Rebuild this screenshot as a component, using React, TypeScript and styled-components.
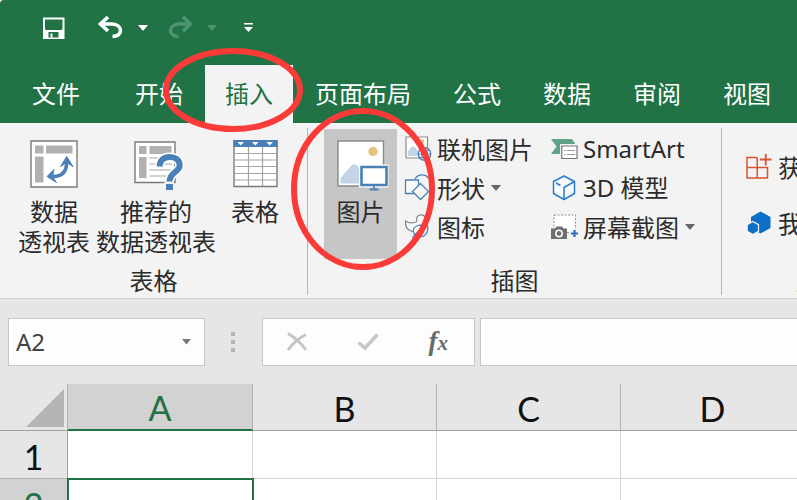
import React from 'react';
import styled, { createGlobalStyle } from 'styled-components';

const GREEN = '#217346';
const BLUE = '#4a80b8';
const UI_FONT = "'Noto Sans', 'Noto Sans CJK SC', sans-serif";
const CJK_FONT = "'Noto Sans CJK SC', 'Noto Sans', sans-serif";

const GlobalStyle = createGlobalStyle`
  * { box-sizing: border-box; }
  body { margin: 0; background: #fff; }
  button, input { font: inherit; color: inherit; }
  button { border: 0; padding: 0; background: none; cursor: pointer; }
  svg { display: block; flex: none; overflow: visible; }
`;

const Window = styled.div`
  height: 100vh;
  overflow: hidden;
  display: flex;
  flex-direction: column;
  border-top-left-radius: 4px;
  background: #e6e6e6;
  font-family: ${UI_FONT};
  font-size: 24px;
  line-height: 30px;
  color: #2b2b2b;
`;

const TitleBar = styled.header`
  flex: none;
  background: ${GREEN};
  color: #fff;
`;

const QuickAccess = styled.div`
  display: flex;
  align-items: center;
  height: 65px;
  padding: 0 42px 9px;
`;

const QuickButton = styled.button<{ $space: number; $dim?: boolean }>`
  display: flex;
  margin-right: ${(p) => p.$space}px;
  color: ${(p) => (p.$dim ? '#4f9470' : '#fff')};
`;

const TabList = styled.nav`
  display: flex;
  gap: 2px;
  padding-left: 12px;
  font-family: ${CJK_FONT};
`;

const Tab = styled.button<{ $active?: boolean; $file?: boolean }>`
  position: relative;
  flex: none;
  height: 58px;
  padding: 0 20px 3px;
  margin-right: ${(p) => (p.$file ? 13 : 0)}px;
  white-space: nowrap;
  background: ${(p) => (p.$active ? '#f3f3f3' : 'transparent')};
  color: ${(p) => (p.$active ? GREEN : '#fff')};
`;

const Ring = styled.svg<{ $left: number; $top: number }>`
  position: absolute;
  left: ${(p) => p.$left}px;
  top: ${(p) => p.$top}px;
  z-index: 2;
  pointer-events: none;
  fill: none;
  stroke: #fa3b38;
  stroke-width: 6;
`;

const Ribbon = styled.section`
  flex: none;
  display: flex;
  background: #f3f3f3;
  border-bottom: 1px solid #cfcfcf;
  padding: 5px 0 3px;
`;

const Group = styled.div`
  flex: none;
  display: flex;
  flex-direction: column;
  border-right: 1px solid #b5b5b5;
  font-family: ${CJK_FONT};
`;

const GroupBody = styled.div<{ $gap: number; $pad: string }>`
  display: flex;
  gap: ${(p) => p.$gap}px;
  height: 131px;
  padding: ${(p) => p.$pad};
`;

const GroupLabel = styled.div`
  margin-top: 6px;
  text-align: center;
`;

const LargeButton = styled.button<{ $width?: number; $pressed?: boolean }>`
  position: relative;
  display: flex;
  flex-direction: column;
  align-items: center;
  gap: 6px;
  min-width: ${(p) => p.$width ?? 0}px;
  padding-top: 11px;
  background: ${(p) => (p.$pressed ? '#c6c6c6' : 'transparent')};
  white-space: pre-line;
`;

const Column = styled.div<{ $end?: number; $top?: number }>`
  display: flex;
  flex-direction: column;
  padding-top: ${(p) => p.$top ?? 0}px;
  margin-right: ${(p) => p.$end ?? 0}px;
`;

const SmallButton = styled.button<{ $tall?: boolean }>`
  display: flex;
  align-items: center;
  gap: 6px;
  height: ${(p) => (p.$tall ? 56 : 39)}px;
  white-space: nowrap;
`;

const LatinText = styled.span`
  font-family: ${UI_FONT};
`;

const FormulaBar = styled.div`
  flex: none;
  display: flex;
  align-items: center;
  padding: 19px 0 18px 8px;
`;

const NameBox = styled.div`
  display: flex;
  align-items: center;
  width: 197px;
  height: 48px;
  padding: 0 13px 0 7px;
  border: 1px solid #c6c6c6;
  background: #fdfdfd;
  color: #444;
`;

const NameInput = styled.input`
  flex: 1;
  min-width: 0;
  padding: 0;
  border: 0;
  outline: 0;
  background: transparent;
`;

const Grip = styled.svg`
  margin: 0 27px 0 26px;
`;

const FormulaActions = styled.div`
  display: flex;
  align-items: center;
  justify-content: space-between;
  width: 213px;
  height: 48px;
  padding: 0 26px 0 24px;
  margin-right: 5px;
  border: 1px solid #c6c6c6;
  background: #fdfdfd;
`;

const FxButton = styled.button`
  font-family: 'Liberation Serif', serif;
  font-style: italic;
  font-weight: 700;
  font-size: 27px;
  color: #6a6a6a;
`;

const FxSub = styled.span`
  font-size: 21px;
`;

const FormulaInput = styled.input`
  flex: 1;
  min-width: 0;
  height: 48px;
  padding: 0 8px;
  border: 1px solid #c6c6c6;
  border-right: 0;
  outline: 0;
  background: #fdfdfd;
`;

const SheetArea = styled.main`
  flex: 1;
  min-height: 0;
  overflow: hidden;
  background: #fff;
`;

const Sheet = styled.table`
  table-layout: fixed;
  width: 805px;
  border-collapse: separate;
  border-spacing: 0;
  background: #fff;
  font-family: Lato, 'Noto Sans', sans-serif;
  font-size: 34px;
  color: #111;
`;

const SizeCol = styled.col<{ $width: number }>`
  width: ${(p) => p.$width}px;
`;

const Corner = styled.th`
  padding: 0 3px 3px 0;
  background: #e6e6e6;
  border-right: 1px solid #b0b0b0;
  border-bottom: 1px solid #9f9f9f;
  vertical-align: bottom;
`;

const CornerMark = styled.svg`
  margin-left: auto;
`;

const ColumnHead = styled.th<{ $active?: boolean }>`
  height: 47px;
  padding: 3px 0 0;
  font-weight: 400;
  line-height: 42px;
  background: ${(p) => (p.$active ? '#d2d2d2' : '#e6e6e6')};
  color: ${(p) => (p.$active ? GREEN : '#111')};
  border-right: 1px solid #b0b0b0;
  border-bottom: ${(p) => (p.$active ? `2px solid ${GREEN}` : '1px solid #9f9f9f')};
`;

const RowHead = styled.th<{ $active?: boolean }>`
  height: 48px;
  padding: 5px 0 0;
  font-weight: 400;
  line-height: 42px;
  background: ${(p) => (p.$active ? '#d2d2d2' : '#e6e6e6')};
  color: ${(p) => (p.$active ? GREEN : '#111')};
  border-right: 1px solid #9f9f9f;
  border-bottom: 1px solid #b0b0b0;
`;

const Cell = styled.td<{ $selected?: boolean }>`
  padding: 0;
  border-right: 1px solid #d4d4d4;
  border-bottom: 1px solid #d4d4d4;
  outline: ${(p) => (p.$selected ? `2px solid ${GREEN}` : 'none')};
  outline-offset: -1px;
`;

const Caret = ({ size = 10, color = 'currentColor' }: { size?: number; color?: string }) => (
  <svg width={size} height={size / 2 + 1} viewBox="0 0 10 6" fill={color}>
    <path d="M0 0H10L5 6Z" />
  </svg>
);

const SaveIcon = () => (
  <svg width="24" height="24" viewBox="0 0 24 24" fill="none">
    <path d="M1 1.500H22.500V23H1ZM3 3.500V12.500Q3 14 4.500 14H19Q20.500 14 20.500 12.500V3.500Z" fill="currentColor" fillRule="evenodd" />
    <path d="M6.500 16H16.500V21.500H6.500Z" fill={GREEN} />
    <path d="M8.500 17.500H10.500V21.500H8.500Z" fill="currentColor" />
  </svg>
);

const UndoIcon = ({ flip }: { flip?: boolean }) => (
  <svg width="25" height="24" viewBox="0 0 25 24" fill="none" stroke="currentColor" strokeWidth="3.6">
    <g transform={flip ? 'translate(25 0) scale(-1 1)' : undefined}>
      <path d="M2 8H14C25 8.500 25.500 20.500 14.500 20.500" />
      <path d="M10 1L2.500 8L10 15" />
    </g>
  </svg>
);

const MoreIcon = () => (
  <svg width="9" height="10" viewBox="0 0 9 10" fill="currentColor">
    <path d="M0 0H9V1.500H0ZM0 4H9L4.500 9Z" />
  </svg>
);

const PivotIcon = () => (
  <svg width="50" height="50" viewBox="0 0 50 50">
    <path d="M2 1H48V47H2Z" fill="#fff" stroke="#7a7a7a" strokeWidth="1.4" />
    <path d="M6 5.500H14.500V13.500H6ZM17 5.500H43.500V13.500H17ZM6 16.500H14.500V42.500H6Z" fill="#b1b1b1" />
    <path d="M24 36.500C33 36.500 37.700 31.500 37.700 22" fill="none" stroke={BLUE} strokeWidth="3.600" />
    <path d="M37.700 16.500L44 26.500L37.700 22.500L31.500 26.500ZM18 36.500L25 29.500L23.500 36.500L27.500 42.500Z" fill={BLUE} stroke={BLUE} />
  </svg>
);

const RecommendedIcon = () => (
  <svg width="50" height="50" viewBox="0 0 50 50">
    <path d="M4 2H44V42.500H4Z" fill="#fff" stroke="#7a7a7a" strokeWidth="1.400" />
    <path d="M8 6H15.500V14H8ZM18.500 6H40.500V14H18.500ZM8 17H15.500V38H8Z" fill="#b1b1b1" />
    <path d="M18.500 18H41M18.500 24H41M18.500 30H41M18.500 36H41" stroke="#c4c4c4" strokeWidth="1.500" />
    <g fill="none">
      <path d="M28.500 26.500C29 20 33 17 38.500 17C44 17 48.700 19.500 48.700 25.500C48.700 32 38.500 32 38.500 41.500" stroke="#fff" strokeWidth="9" />
      <path d="M33.500 42H43V50H33.500Z" fill="#f3f3f3" />
      <path d="M28.500 26.500C29 20 33 17 38.500 17C44 17 48.700 19.500 48.700 25.500C48.700 32 38.500 32 38.500 41.500" stroke={BLUE} strokeWidth="6" />
      <path d="M35 44H42V50H35Z" fill={BLUE} />
    </g>
  </svg>
);

const TableIcon = () => (
  <svg width="50" height="50" viewBox="0 0 50 50">
    <path d="M4 1H47V46.500H4Z" fill="#fff" stroke="#7a7a7a" strokeWidth="1.400" />
    <path d="M18.500 7V46M32.500 7V46M4 13.500H47M4 20H47M4 26.500H47M4 33.500H47M4 40H47" stroke="#a5a5a5" strokeWidth="1.200" fill="none" />
    <path d="M3.300 0H47.700V7H3.300Z" fill={BLUE} />
    <path d="M7.500 2H14L10.700 5.500ZM22 2H28.500L25.300 5.500ZM36.500 2H43L39.700 5.500Z" fill="#fff" />
  </svg>
);

const PictureIcon = () => (
  <svg width="50" height="50" viewBox="0 0 50 50">
    <path d="M2 1H47.500V46H2Z" fill="#fff" stroke="#8a8a8a" strokeWidth="1.400" />
    <circle cx="37" cy="11.500" r="4.700" fill="#e9c27d" />
    <path d="M4.500 43.500V38L15.500 25.500Q18 23 21 25.500L30 34V43.500Z" fill="#c3d4e8" />
    <path d="M23 24.500H52.500V47.500H23Z" fill="#fff" />
    <path d="M25.500 27H50.500V45H25.500Z" fill="#fff" stroke={BLUE} strokeWidth="2.600" />
    <path d="M38 46V49M33.500 49.500H42.500" stroke={BLUE} strokeWidth="1.800" />
  </svg>
);

const OnlinePictureIcon = () => (
  <svg width="26" height="26" viewBox="0 0 26 26" fill="none">
    <path d="M1 1H22.500V22H1Z" fill="#fff" stroke="#8a8a8a" strokeWidth="1.200" />
    <circle cx="17" cy="5.500" r="2.300" fill="#e9c27d" />
    <path d="M3 20V15L7 10.500H9L14 16V20Z" fill="#c3d4e8" />
    <circle cx="19.500" cy="18" r="6.200" fill="#fff" stroke={BLUE} strokeWidth="1.400" />
    <path d="M13.500 18H25.500M15 14.500H24M15 21.500H24M19.500 12C15.500 16 15.500 20 19.500 24C23.500 20 23.500 16 19.500 12" stroke={BLUE} />
  </svg>
);

const ShapesIcon = () => (
  <svg width="26" height="26" viewBox="0 0 26 26" fill="#f8f8f8" stroke={BLUE} strokeWidth="1.300">
    <path d="M10 4C13 -1.500 21 -1.500 24 4" fill="none" />
    <path d="M0.500 5H13.500V18.500H0.500Z" />
    <path d="M15.500 8.500L23.500 16.500L15.500 24.500L7.500 16.500Z" />
  </svg>
);

const DuckLeafIcon = () => (
  <svg width="26" height="26" viewBox="0 0 26 26" fill="none" strokeWidth="1.200">
    <path d="M0.500 7C3 9 7 9.500 11 8C13 7 11 5 12 3C13.500 0 19 0 20 3.500L22.500 5.500L19.500 7C19 9 18 10 19 12C18 18 11 19 6 17C2 15.500 0 12 0.500 7Z" fill="#fafafa" stroke="#858585" />
    <path d="M7.500 24C9 21 12 18 16 15.500M9.500 20.500C5.500 14 12 9 22.500 11.500C24 20 18 26 9.500 20.500Z" fill="#fafafa" stroke={BLUE} />
  </svg>
);

const SmartArtIcon = () => (
  <svg width="26" height="26" viewBox="0 0 26 26">
    <path d="M0 3H21L26 10.500L21 18H0L5.500 10.500Z" fill="#5fa386" />
    <path d="M9 8H27V24H9Z" fill="#f3f3f3" />
    <path d="M10.700 10H26V22.500H10.700Z" fill="#fff" stroke="#777" strokeWidth="1.200" />
    <path d="M13 14.500H14.500M16 14.500H24M13 18.500H14.500M16 18.500H24" stroke="#999" />
  </svg>
);

const CubeIcon = () => (
  <svg width="26" height="26" viewBox="0 0 26 26" fill="#f8fbfe" stroke="#2b7cc9" strokeWidth="1.500" strokeLinejoin="round">
    <path d="M13 1L23.500 6.500V18.500L13 24.500L2.500 18.500V6.500Z" />
    <path d="M5 8L9.500 10.500M23.500 6.500L13 12.500V24.500" fill="none" />
  </svg>
);

const ScreenshotIcon = () => (
  <svg width="26" height="26" viewBox="0 0 26 26">
    <path d="M3 1H24.500V18.500H3Z" fill="#fff" stroke="#909090" strokeDasharray="2 1.500" />
    <path d="M0 14.500H4L5.500 12.500H11L12.500 14.500H16V25H0Z" fill="#6f6f6f" />
    <circle cx="8" cy="19.500" r="3.200" fill="none" stroke="#fff" strokeWidth="1.500" />
    <path d="M19 15H27V24H19Z" fill="#f3f3f3" />
    <path d="M20 19.500H27M23.500 16V23" stroke="#2f6fb5" strokeWidth="2.200" />
  </svg>
);

const GetAddInsIcon = () => (
  <svg width="26" height="26" viewBox="0 0 26 26" fill="none" stroke="#d9532c" strokeWidth="1.500">
    <path d="M11.200 3.500H1V24H21.500V13.500H1M11.200 3.500V24" />
    <path d="M14 5.500H25.500M19.700 0V11.500" strokeWidth="1.800" />
  </svg>
);

const MyAddInsIcon = () => (
  <svg width="26" height="26" viewBox="0 0 26 26" fill="#0b6fc7">
    <path d="M14.500 1.500L24.500 7V18L14.500 23.500L5 18V7Z" />
    <path d="M6.800 11.500L12.500 14.700V21.300L6.800 24.500L1.200 21.300V14.700Z" stroke="#f3f3f3" strokeWidth="1.200" />
  </svg>
);

const CancelIcon = () => (
  <svg width="20" height="20" viewBox="0 0 20 20" fill="none" stroke="#c4c4c4" strokeWidth="2.800">
    <path d="M1 1.500C7 5 14 11 19 18M19 2.500C12 6 6 11 1 18" />
  </svg>
);

const EnterIcon = () => (
  <svg width="22" height="18" viewBox="0 0 22 18" fill="none" stroke="#c8c8c8" strokeWidth="3.600">
    <path d="M1.500 9.500L8 15L20.500 1.500" />
  </svg>
);

const TABS = ['文件', '开始', '插入', '页面布局', '公式', '数据', '审阅', '视图'];
const COLUMNS = ['A', 'B', 'C', 'D'];
const ROWS = [1, 2];

export default function App() {
  return (
    <>
      <GlobalStyle />
      <Window>
        <TitleBar>
          <QuickAccess>
            <QuickButton $space={32} aria-label="保存"><SaveIcon /></QuickButton>
            <QuickButton $space={15} aria-label="撤消"><UndoIcon /></QuickButton>
            <QuickButton $space={20} aria-label="撤消列表"><Caret /></QuickButton>
            <QuickButton $space={14} $dim aria-label="恢复"><UndoIcon flip /></QuickButton>
            <QuickButton $space={27} $dim aria-label="恢复列表"><Caret /></QuickButton>
            <QuickButton $space={0} aria-label="自定义快速访问工具栏"><MoreIcon /></QuickButton>
          </QuickAccess>
          <TabList>
            {TABS.map((name, i) => (
              <Tab key={name} $file={i === 0} $active={name === '插入'}>
                {name}
                {name === '插入' && (
                  <Ring $left={-42} $top={-17} width="140" height="85">
                    <ellipse cx="70" cy="42" rx="67" ry="39" />
                  </Ring>
                )}
              </Tab>
            ))}
          </TabList>
        </TitleBar>

        <Ribbon>
          <Group>
            <GroupBody $gap={6} $pad="1px 19px 0 18px">
              <LargeButton><PivotIcon />{'数据\n透视表'}</LargeButton>
              <LargeButton><RecommendedIcon />{'推荐的\n数据透视表'}</LargeButton>
              <LargeButton $width={66}><TableIcon />表格</LargeButton>
            </GroupBody>
            <GroupLabel>表格</GroupLabel>
          </Group>

          <Group>
            <GroupBody $gap={8} $pad="1px 26px 0 16px">
              <LargeButton $width={73} $pressed>
                <PictureIcon />
                图片
                <Ring $left={-33} $top={-21} width="144" height="163">
                  <ellipse cx="72" cy="81" rx="69" ry="78" />
                </Ring>
              </LargeButton>
              <Column $end={10}>
                <SmallButton><OnlinePictureIcon />联机图片</SmallButton>
                <SmallButton><ShapesIcon />形状<Caret color="#666" /></SmallButton>
                <SmallButton><DuckLeafIcon />图标</SmallButton>
              </Column>
              <Column>
                <SmallButton><SmartArtIcon /><LatinText>SmartArt</LatinText></SmallButton>
                <SmallButton><CubeIcon /><LatinText>3D 模型</LatinText></SmallButton>
                <SmallButton><ScreenshotIcon />屏幕截图<Caret color="#666" /></SmallButton>
              </Column>
            </GroupBody>
            <GroupLabel>插图</GroupLabel>
          </Group>

          <Group>
            <GroupBody $gap={0} $pad="1px 28px 0 24px">
              <Column $top={10}>
                <SmallButton $tall><GetAddInsIcon />获取加载项</SmallButton>
                <SmallButton $tall><MyAddInsIcon />我的加载项<Caret color="#666" /></SmallButton>
              </Column>
            </GroupBody>
            <GroupLabel>加载项</GroupLabel>
          </Group>
        </Ribbon>

        <FormulaBar>
          <NameBox>
            <NameInput aria-label="名称框" defaultValue="A2" />
            <Caret size={9} color="#777" />
          </NameBox>
          <Grip width="4" height="20" viewBox="0 0 4 20" fill="#b5b5b5">
            <path d="M0 0H4V4H0ZM0 8H4V12H0ZM0 16H4V20H0Z" />
          </Grip>
          <FormulaActions>
            <button aria-label="取消"><CancelIcon /></button>
            <button aria-label="输入"><EnterIcon /></button>
            <FxButton aria-label="插入函数">f<FxSub>x</FxSub></FxButton>
          </FormulaActions>
          <FormulaInput aria-label="编辑栏" />
        </FormulaBar>

        <SheetArea>
          <Sheet>
            <colgroup>
              <SizeCol $width={68} />
              <SizeCol $width={185} />
              <SizeCol $width={184} />
              <SizeCol $width={184} />
              <SizeCol $width={184} />
            </colgroup>
            <thead>
              <tr>
                <Corner aria-label="全选">
                  <CornerMark width="38" height="38" viewBox="0 0 38 38">
                    <path d="M38 0V38H0Z" fill="#b4b4b4" />
                  </CornerMark>
                </Corner>
                {COLUMNS.map((c) => (
                  <ColumnHead key={c} scope="col" $active={c === 'A'}>{c}</ColumnHead>
                ))}
              </tr>
            </thead>
            <tbody>
              {ROWS.map((r) => (
                <tr key={r}>
                  <RowHead scope="row" $active={r === 2}>{r}</RowHead>
                  {COLUMNS.map((c) => (
                    <Cell key={c} $selected={r === 2 && c === 'A'} />
                  ))}
                </tr>
              ))}
            </tbody>
          </Sheet>
        </SheetArea>
      </Window>
    </>
  );
}
